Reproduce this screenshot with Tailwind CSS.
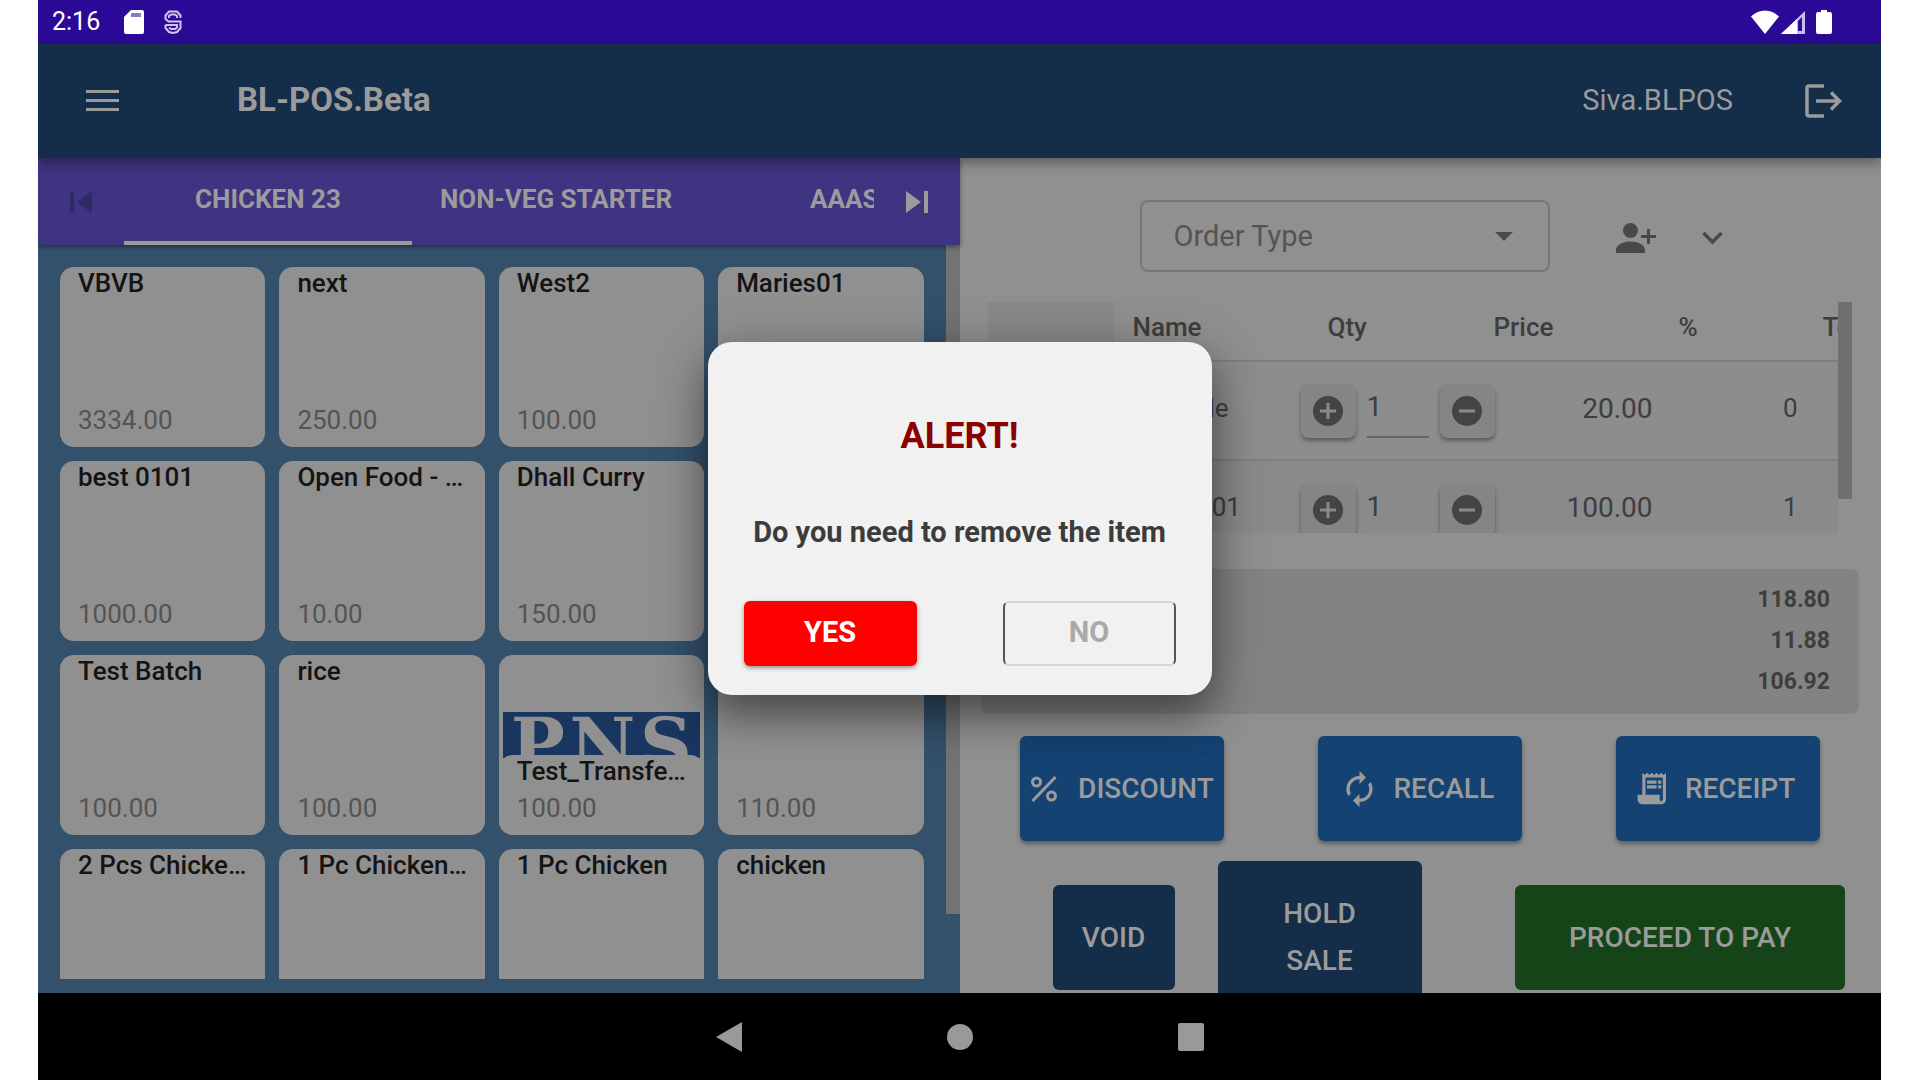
<!DOCTYPE html>
<html lang="en">
<head>
<meta charset="utf-8">
<title>BL-POS.Beta</title>
<script src="https://cdn.jsdelivr.net/npm/@tailwindcss/browser@4"></script>
</head>
<body class="bg-white font-['Roboto',sans-serif]">
<div class="relative ml-[38px] mr-[39px] flex h-screen flex-col overflow-hidden bg-[#909090]">

  <!-- Android status bar -->
  <div class="flex h-11 shrink-0 items-center bg-[#2a0a96] pl-[14px] pr-[49px] text-white">
    <span class="text-[25px] leading-8">2:16</span>
    <svg class="ml-[24px] h-6 w-5" viewBox="0 0 20 24" fill="currentColor"><path d="M7 0h11a2 2 0 0 1 2 2v20a2 2 0 0 1-2 2H2a2 2 0 0 1-2-2V7z"/><path d="M7 3h10v4H7z" fill="#8a78c8"/></svg>
    <svg class="ml-[20px] h-6 w-[18px]" viewBox="0 0 18 24" fill="none" stroke="#cfc4ee" stroke-width="2"><path d="M16.500 8V5.500L13 1.500H5L1.500 5.500V9l3 2.500H16.500V18L13 22l-4 1-4-1-3.500-4v-3M5 8V6l2-1.500h4L13 6v2M1.500 15H13v2.500L11 19H7l-2-1.500"/></svg>
    <svg class="ml-auto h-6 w-7" viewBox="0 0 28 24" fill="currentColor"><path d="M14 24 0 6.500C4 2.500 9 .5 14 .5s10 2 14 6z"/></svg>
    <svg class="ml-[2px] h-6 w-6" viewBox="0 0 24 24"><path d="M24 1v23H0z" fill="#c9bdf0"/><path d="M16 9v15H0z" fill="#fff"/><path d="M17 11l4-4v14h-4z" fill="#2a0a96"/></svg>
    <svg class="ml-[11px] h-6 w-4" viewBox="0 0 16 24" fill="currentColor"><path d="M5 0h6v2h3a2 2 0 0 1 2 2v18a2 2 0 0 1-2 2H2a2 2 0 0 1-2-2V4a2 2 0 0 1 2-2h3z"/></svg>
  </div>

  <!-- App bar -->
  <header class="relative z-10 flex h-[114px] shrink-0 items-center bg-[#142d48] pl-12 pr-[39px] text-[#9b9b9b] shadow-[0_4px_12px_rgba(0,0,0,0.4)]">
    <button aria-label="Menu" class="block"><svg class="h-[22px] w-[33px]" viewBox="0 0 33 22" fill="currentColor"><path d="M0 0h33v3H0zM0 9h33v3H0zM0 18h33v3H0z"/></svg></button>
    <h1 class="ml-[118px] pb-[2px] text-[33px] leading-10 font-bold">BL-POS.Beta</h1>
    <span class="ml-auto pb-[2px] text-[29px] leading-10">Siva.BLPOS</span>
    <button aria-label="Log out" class="ml-[72px] block"><svg class="h-[34px] w-[37px]" viewBox="0 0 37 34" fill="none" stroke="currentColor" stroke-width="3.500"><path d="M19 2H4a2 2 0 0 0-2 2v26a2 2 0 0 0 2 2h15"/><path d="M11 17h23M26 8.500l8.500 8.500-8.500 8.500"/></svg></button>
  </header>

  <div class="flex min-h-0 flex-1">
    <!-- Catalogue -->
    <section class="flex w-1/2 flex-col bg-[#33516b]">
      <nav class="relative z-1 flex h-[87px] shrink-0 items-stretch rounded-bl-md bg-[#3e3481] text-[26px] font-bold text-[#9b9b9b] shadow-[0_2px_5px_rgba(0,0,0,0.4)]">
        <button aria-label="Previous tabs" class="flex w-[86px] shrink-0 items-center pl-8"><svg class="h-[22px] w-[22px]" viewBox="0 0 22 22" fill="#2f2a66"><path d="M0 0h4v22H0zM22 0v22L7 11z"/></svg></button>
        <div class="flex min-w-0 flex-1 overflow-hidden">
          <button class="w-[288px] shrink-0 border-b-[4px] border-[#9b9b96]">CHICKEN 23</button>
          <button class="w-[288px] shrink-0 border-b-[4px] border-transparent">NON-VEG STARTER</button>
          <button class="w-[288px] shrink-0 border-b-[4px] border-transparent pl-[110px] text-left">AAAS</button>
        </div>
        <button aria-label="Next tabs" class="flex w-[86px] shrink-0 items-center pl-8"><svg class="h-[22px] w-[22px]" viewBox="0 0 22 22" fill="currentColor"><path d="M18 0h4v22h-4zM0 0v22l15-11z"/></svg></button>
      </nav>
      <div class="flex min-h-0 flex-1">
        <div class="mb-[14px] grid flex-1 auto-rows-[180px] grid-cols-4 gap-x-[14px] gap-y-[14px] overflow-hidden px-[22px] pt-[22px] text-[26px] leading-8 text-[#545454]" id="items"></div>
        <div class="h-[669px] w-[14px] bg-[#737373]"></div>
      </div>
    </section>

    <!-- Cart -->
    <section class="flex w-1/2 flex-col pt-[42px] text-[#3e3e3e]">
      <div class="flex h-[72px] shrink-0 items-center pl-[180px]">
        <div class="relative h-full w-[410px]">
          <select aria-label="Order Type" class="h-full w-full appearance-none rounded-lg border-2 border-[#777] bg-transparent pt-[2px] pl-8 text-[29px] text-[#545454]"><option>Order Type</option></select>
          <svg class="pointer-events-none absolute top-[32px] right-[37px] h-[9px] w-[18px]" viewBox="0 0 18 9" fill="#4a4a4a"><path d="M0 0h18l-9 9z"/></svg>
        </div>
        <button aria-label="Add customer" class="ml-[66px] block pt-1"><svg class="h-[30px] w-10" viewBox="0 0 40 30" fill="#484848"><circle cx="14.500" cy="7.500" r="7.500"/><path d="M0 30v-3c0-6 9-8.500 14.500-8.500S29 21 29 27v3zM31 6h3v6h6v3h-6v6h-3v-6h-6v-3h6z"/></svg></button>
        <button aria-label="More" class="ml-[46px] block pt-1"><svg class="h-[14px] w-[21px]" viewBox="0 0 21 14" fill="none" stroke="#484848" stroke-width="3.500"><path d="M1.500 2l9 9 9-9"/></svg></button>
      </div>

      <div class="mt-[30px] flex h-[231px] shrink-0 overflow-hidden pl-7 pr-[29px]">
        <div class="min-w-0 flex-1 overflow-hidden">
          <table class="w-full table-fixed text-left text-[26px] leading-8 whitespace-nowrap">
            <colgroup><col class="w-[126px]"><col class="w-[167px]"><col class="w-[213px]"><col class="w-[159px]"><col class="w-[150px]"><col></colgroup>
            <thead>
              <tr class="h-[59px] border-b-2 border-[#7f7f7f] [&>th]:p-0 [&>th]:pb-2 [&>th]:font-medium">
                <th class="bg-[#898989]"></th><th><div class="pl-[19px]">Name</div></th><th><div class="pl-[47px]">Qty</div></th><th>Price</th><th><div class="pl-[26px]">%</div></th><th><div class="overflow-hidden pl-5">Total</div></th>
              </tr>
            </thead>
            <tbody id="cart"></tbody>
          </table>
        </div>
        <div class="h-[197px] w-[14px] shrink-0 bg-[#707070]"></div>
      </div>

      <div class="mt-9 mr-[22px] ml-[21px] flex h-[145px] shrink-0 flex-col items-end justify-center rounded-lg bg-[#838383] pr-[29px] pb-[3px] text-[23px] leading-[41px] font-bold">
        <span>118.80</span><span>11.88</span><span>106.92</span>
      </div>

      <div class="mt-[22px] grid shrink-0 grid-cols-3 justify-items-center px-[14px] text-[28px] font-medium text-[#9b9b9b]">
        <button class="flex h-[105px] w-[204px] items-center justify-center gap-[21px] rounded-md bg-[#144272] shadow-[0_3px_4px_rgba(0,0,0,0.35)]">
          <svg class="h-[26px] w-[26px] shrink-0" viewBox="0 0 26 26" fill="none" stroke="currentColor" stroke-width="3"><circle cx="5.500" cy="6" r="4"/><circle cx="20.500" cy="20" r="4"/><path d="M24.500 1l-23 24"/></svg>DISCOUNT</button>
        <button class="flex h-[105px] w-[204px] items-center justify-center gap-[20px] rounded-md bg-[#144272] shadow-[0_3px_4px_rgba(0,0,0,0.35)]">
          <svg class="h-9 w-[27px] shrink-0" viewBox="4 1 16 22" fill="currentColor"><path d="M12 6v3l4-4-4-4v3c-4.420 0-8 3.580-8 8 0 1.570.46 3.030 1.240 4.260L6.700 14.800A5.870 5.870 0 0 1 6 12c0-3.310 2.690-6 6-6zm6.760 1.740L17.300 9.200c.44.840.7 1.790.7 2.800 0 3.310-2.690 6-6 6v-3l-4 4 4 4v-3c4.420 0 8-3.580 8-8 0-1.570-.46-3.030-1.240-4.260z"/></svg>RECALL</button>
        <button class="flex h-[105px] w-[204px] items-center justify-center gap-[19px] rounded-md bg-[#144272] pr-[5px] shadow-[0_3px_4px_rgba(0,0,0,0.35)]">
          <svg class="h-[33px] w-[30px] shrink-0" viewBox="2 2 19 20" fill="currentColor"><path d="M19.500 3.500L18 2l-1.500 1.500L15 2l-1.500 1.500L12 2l-1.500 1.500L9 2 7.500 3.500 6 2v14H3v3c0 1.660 1.340 3 3 3h12c1.660 0 3-1.340 3-3V2l-1.500 1.500zM19 19c0 .55-.45 1-1 1s-1-.45-1-1v-3H8V5h11v14z"/><path d="M9 7h6v2H9zM16 7h2v2h-2zM9 10h6v2H9zM16 10h2v2h-2z"/></svg>RECEIPT</button>
      </div>

      <div class="mt-5 flex shrink-0 items-center pr-9 pl-[93px] text-[28px] leading-[47px] font-medium text-[#9b9b9b]">
        <button class="h-[105px] w-[122px] rounded-md bg-[#142d49]">VOID</button>
        <button class="ml-[43px] h-[152px] w-[204px] rounded-md bg-[#142d49] px-12">HOLD SALE</button>
        <button class="ml-auto h-[105px] w-[330px] rounded-md bg-[#164419]">PROCEED TO PAY</button>
      </div>
    </section>
  </div>

  <!-- Android navigation bar -->
  <div class="relative z-10 flex h-[87px] shrink-0 items-center justify-center gap-[205px] bg-black">
    <button aria-label="Back" class="block"><svg class="h-[30px] w-[26px]" viewBox="0 0 26 30" fill="#999"><path d="M26 0v30L0 15z"/></svg></button>
    <button aria-label="Home" class="block"><svg class="h-[26px] w-[26px]" viewBox="0 0 26 26" fill="#999"><circle cx="13" cy="13" r="13"/></svg></button>
    <button aria-label="Recents" class="block"><svg class="h-7 w-[26px]" viewBox="0 0 26 28" fill="#999"><rect width="26" height="28" rx="2"/></svg></button>
  </div>

  <!-- Confirmation dialog -->
  <div class="absolute inset-0 z-20 flex justify-center pt-[342px]">
    <div role="alertdialog" aria-labelledby="dlg-title" class="flex h-[353px] w-[504px] flex-col items-center rounded-3xl bg-[#f1f1f1] px-9 pt-[69px] shadow-[0_20px_40px_rgba(0,0,0,0.4),0_10px_60px_rgba(0,0,0,0.2)]">
      <h2 id="dlg-title" class="text-[36px] leading-[50px] font-bold text-[#8b0000]">ALERT!</h2>
      <p class="mt-[51px] text-[29px] leading-10 font-bold whitespace-nowrap text-[#3c3c3c]">Do you need to remove the item</p>
      <div class="mt-[49px] flex w-full justify-between text-[29px] font-bold">
        <button class="h-[65px] w-[173px] rounded-md bg-[#ff0000] pb-[2px] text-white shadow-[0_2px_4px_rgba(0,0,0,0.4)]">YES</button>
        <button class="h-[65px] w-[173px] rounded-md border-2 border-x-[#555] border-y-[#d4d4d4] pb-[2px] text-[#a9a9a9]">NO</button>
      </div>
    </div>
  </div>
</div>

<script>
  const items = [
    ['VBVB', '3334.00'], ['next', '250.00'], ['West2', '100.00'], ['Maries01', '100.00'],
    ['best 0101', '1000.00'], ['Open Food - Veg', '10.00'], ['Dhall Curry', '150.00'], ['Curry', '120.00'],
    ['Test Batch', '100.00'], ['rice', '100.00'], ['Test_Transfer01', '100.00', true], ['Tea', '110.00'],
    ['2 Pcs Chicken Meal', '200.00'], ['1 Pc Chicken Meal', '150.00'], ['1 Pc Chicken', '100.00'], ['chicken', '90.00'],
  ];
  const logo = `<div class="absolute inset-x-1 top-[57px] flex h-[46px] justify-between overflow-hidden bg-[#18365f] px-2 pt-[2px] font-['DejaVu_Serif',serif] text-[72px] leading-[62px] font-bold text-[#909090]"><span>P</span><span>N</span><span>S</span></div>`;
  document.getElementById('items').innerHTML = items.map(([name, price, pic]) => `
    <article class="relative flex flex-col justify-between overflow-hidden rounded-[14px] bg-[#909090]">
      ${pic ? logo : ''}
      <div class="${pic ? 'relative mt-[100px] rounded-t-[14px] bg-[#909090]' : ''} truncate pr-4 pl-[18px] font-medium text-[#141414]">${name}</div>
      <div class="relative px-[18px] ${pic ? 'flex-1 bg-[#909090] pt-[5px]' : 'pb-[11px]'}">${price}</div>
    </article>`).join('');

  const step = (label, bar) => `<button aria-label="${label}" class="flex h-[54px] w-[55px] shrink-0 items-center justify-center rounded-lg bg-[#858585] shadow-[0_3px_4px_rgba(0,0,0,0.35)]"><svg class="h-[30px] w-[30px]" viewBox="0 0 30 30"><circle cx="15" cy="15" r="15" fill="#444"/><path d="${bar}" stroke="#8a8a8a" stroke-width="3"/></svg></button>`;
  document.getElementById('cart').innerHTML = [['Bramble', '20.00', 0], ['Maries01', '100.00', 1]].map(([name, price, pct], i) => `
    <tr class="h-[99px] border-b-2 border-[#7f7f7f] ${i ? 'bg-[#8a8a8a]' : 'bg-[#8d8d8d]'} [&>td]:p-0">
      <td></td><td><div class="pb-[5px] pl-[19px]">${name}</div></td>
      <td><div class="flex items-center pl-5">${step('Increase', 'M7 15h16M15 7v16')}
        <input aria-label="Quantity" value="1" class="mr-[11px] ml-[11px] h-[54px] w-[62px] ${i ? '' : 'border-b-2 border-[#666]'} bg-transparent pb-[7px] text-[28px]">${step('Decrease', 'M7 15h16')}</div></td>
      <td class="text-right text-[28px]"><div class="pb-[3px]">${price}</div></td>
      <td class="text-right"><div class="pr-[5px] pb-[5px]">${pct}</div></td><td></td>
    </tr>`).join('');
</script>
</body>
</html>
